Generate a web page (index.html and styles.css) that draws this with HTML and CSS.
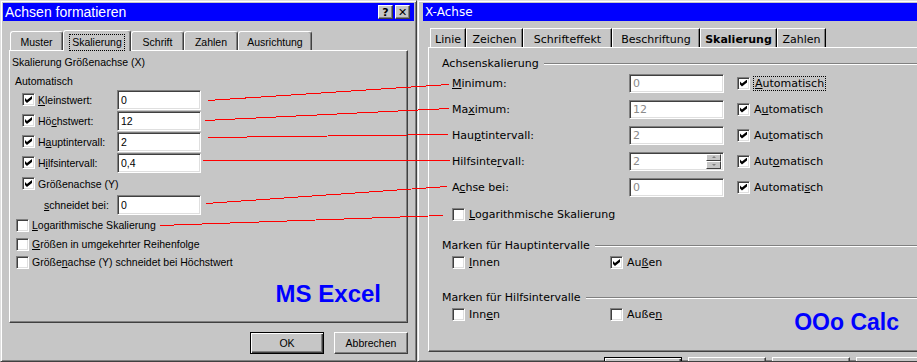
FILE: index.html
```html
<!DOCTYPE html>
<html lang="de">

<head>
    <meta charset="UTF-8">
    <meta name="viewport" content="width=device-width, initial-scale=1.0">
    <title>Achsen formatieren / X-Achse</title>
    <link rel="stylesheet" href="styles.css">
</head>

<body>
    <div class="screen">

        <!-- MS Excel -->
        <section class="dlg xl">
            <header class="caption">
                <span>Achsen formatieren</span>
                <span class="caption-btns"><span class="cbtn">?</span><span class="cbtn">✕</span></span>
            </header>
            <nav class="xl-tabs">
                <span class="tab t-muster">Muster</span>
                <span class="tab active t-skal"><span class="focus">Skalierung</span></span>
                <span class="tab t-schrift">Schrift</span>
                <span class="tab t-zahlen">Zahlen</span>
                <span class="tab t-ausr">Ausrichtung</span>
            </nav>
            <div class="xl-panel">
                <div class="xl-head">Skalierung Größenachse (X)</div>
                <div class="xl-sub">Automatisch</div>
                <div class="xl-rows">
                    <div class="xl-row"><span class="cb on"></span><span class="xl-label"><u>K</u>leinstwert:</span><span class="field">0</span></div>
                    <div class="xl-row"><span class="cb on"></span><span class="xl-label">Hö<u>c</u>hstwert:</span><span class="field">12</span></div>
                    <div class="xl-row"><span class="cb on"></span><span class="xl-label">H<u>a</u>uptintervall:</span><span class="field">2</span></div>
                    <div class="xl-row"><span class="cb on"></span><span class="xl-label">H<u>i</u>lfsintervall:</span><span class="field">0,4</span></div>
                    <div class="xl-row"><span class="cb on"></span><span class="xl-label">Größenachse (Y)</span></div>
                    <div class="xl-row"><span class="cb-space"></span><span class="xl-label indent"><u>s</u>chneidet bei:</span><span class="field">0</span></div>
                </div>
                <div class="xl-opt first"><span class="cb"></span><span><u>L</u>ogarithmische Skalierung</span></div>
                <div class="xl-opt"><span class="cb"></span><span><u>G</u>rößen in umgekehrter Reihenfolge</span></div>
                <div class="xl-opt"><span class="cb"></span><span>Größe<u>n</u>achse (Y) schneidet bei Höchstwert</span></div>
                <div class="xl-brand">MS Excel</div>
            </div>
            <div class="xl-buttons">
                <button class="btn default">OK</button>
                <button class="btn">Abbrechen</button>
            </div>
        </section>

        <!-- OOo Calc -->
        <section class="dlg calc">
            <header class="caption"><span>X-Achse</span></header>
            <nav class="calc-tabs">
                <span class="ctab c-linie">Linie</span>
                <span class="ctab c-zeichen">Zeichen</span>
                <span class="ctab c-effekt">Schrifteffekt</span>
                <span class="ctab c-beschr">Beschriftung</span>
                <span class="ctab active c-skal">Skalierung</span>
                <span class="ctab c-zahlen">Zahlen</span>
            </nav>
            <div class="calc-panel">
                <div class="group"><span>Achsenskalierung</span><i class="rule"></i></div>
                <div class="calc-rows">
                    <div class="calc-row"><span class="calc-label"><u>M</u>inimum:</span><span class="field dim">0</span><span class="cb on"></span><span class="focus"><u>A</u>utomatisch</span></div>
                    <div class="calc-row"><span class="calc-label">Ma<u>x</u>imum:</span><span class="field dim">12</span><span class="cb on"></span><span>A<u>u</u>tomatisch</span></div>
                    <div class="calc-row"><span class="calc-label">Hau<u>p</u>tintervall:</span><span class="field dim">2</span><span class="cb on"></span><span>Au<u>t</u>omatisch</span></div>
                    <div class="calc-row"><span class="calc-label">Hilfsinte<u>r</u>vall:</span><span class="field dim spin-field"><span>2</span><span class="spin"><i class="up"></i><i class="down"></i></span></span><span class="cb on"></span><span>Aut<u>o</u>matisch</span></div>
                    <div class="calc-row"><span class="calc-label">A<u>c</u>hse bei:</span><span class="field dim">0</span><span class="cb on"></span><span>Automati<u>s</u>ch</span></div>
                </div>
                <div class="calc-opt"><span class="cb"></span><span><u>L</u>ogarithmische Skalierung</span></div>

                <div class="group g-major"><span>Marken für Hauptintervalle</span><i class="rule"></i></div>
                <div class="marks">
                    <span class="mark"><span class="cb"></span><span><u>I</u>nnen</span></span>
                    <span class="mark"><span class="cb on"></span><span>Au<u>ß</u>en</span></span>
                </div>

                <div class="group g-minor"><span>Marken für Hilfsintervalle</span><i class="rule"></i></div>
                <div class="marks">
                    <span class="mark"><span class="cb"></span><span>Inn<u>e</u>n</span></span>
                    <span class="mark"><span class="cb"></span><span>Auße<u>n</u></span></span>
                    <span class="calc-brand">OOo Calc</span>
                </div>
            </div>
            <!-- only the top edge of these buttons is in view -->
            <div class="calc-buttons">
                <button class="btn default" aria-label="OK"></button>
                <button class="btn" aria-label="Abbrechen"></button>
                <button class="btn" aria-label="Hilfe"></button>
                <button class="btn" aria-label="Zurück"></button>
            </div>
        </section>

        <!-- Verbindungslinien -->
        <svg class="links" width="917" height="362" viewBox="0 0 917 362">
            <g stroke="#ff0000" stroke-width="1" fill="none" shape-rendering="crispEdges">
                <line x1="208" y1="100.5" x2="449" y2="84.5" />
                <line x1="205" y1="120.5" x2="449" y2="108.5" />
                <line x1="208" y1="137.5" x2="448" y2="134.5" />
                <line x1="203" y1="160.5" x2="450" y2="160.5" />
                <line x1="206" y1="203.5" x2="447" y2="186.5" />
                <line x1="160" y1="225.5" x2="443" y2="215.5" />
            </g>
        </svg>
    </div>
</body>

</html>
```

FILE: styles.css
```css
* {
    box-sizing: border-box;
}

body {
    margin: 0;
    background-color: #c6c6c6;
    overflow: hidden;
}

.screen {
    position: relative;
    display: flex;
    width: 917px;
    height: 362px;
    overflow: hidden;
}

/* window frame */
.dlg {
    flex: none;
    height: 362px;
    padding: 2px;
    background-color: #c6c6c6;
    color: #000;
    border: 1px solid;
    border-color: #dfdfdf #404040 #404040 #dfdfdf;
    box-shadow: inset 1px 1px #fff, inset -1px -1px #808080;
    overflow: hidden;
}

.caption {
    display: flex;
    align-items: center;
    justify-content: space-between;
    height: 18px;
    background-color: #0000ff;
    color: #fff;
    white-space: nowrap;
}

.caption-btns {
    display: flex;
    gap: 2px;
}

.cbtn {
    width: 15px;
    height: 14px;
    display: flex;
    align-items: center;
    justify-content: center;
    background-color: #c6c6c6;
    color: #000;
    font: bold 11px "DejaVu Sans", sans-serif;
    border: 1px solid;
    border-color: #fff #404040 #404040 #fff;
    box-shadow: inset -1px -1px #808080;
}

/* shared controls */
.cb {
    flex: none;
    width: 13px;
    height: 13px;
    display: flex;
    align-items: center;
    justify-content: center;
    background-color: #fff;
    border: 1px solid;
    border-color: #808080 #fff #fff #808080;
    box-shadow: inset 1px 1px #404040, inset -1px -1px #dfdfdf;
}

.cb.on::after {
    content: "";
    width: 7px;
    height: 7px;
    background-color: #000;
    clip-path: polygon(0 28%, 28% 57%, 100% 0, 100% 43%, 28% 100%, 0 71%);
}

.field {
    flex: none;
    display: flex;
    align-items: center;
    background-color: #fff;
    padding-left: 3px;
    border: 1px solid;
    border-color: #808080 #fff #fff #808080;
    box-shadow: inset 1px 1px #404040, inset -1px -1px #dfdfdf;
}

.btn {
    font: inherit;
    color: #000;
    padding: 0;
    background-color: #c6c6c6;
    border: 1px solid;
    border-color: #fff #404040 #404040 #fff;
    box-shadow: inset -1px -1px #808080;
}

.btn.default {
    border-color: #000;
    box-shadow: inset 1px 1px #fff, inset -1px -1px #404040, inset -2px -2px #808080;
}

.focus {
    outline: 1px dotted #000;
}

u {
    text-decoration-thickness: 1px;
    text-underline-offset: 1px;
}

/* ---------- MS Excel ---------- */
.xl {
    width: 417px;
    font: 10.5px "Liberation Sans", Arial, sans-serif;
}

.xl .caption {
    font-size: 14px;
    padding: 0 4px 0 2px;
}

.xl-tabs {
    display: flex;
    align-items: flex-end;
    height: 19px;
    margin-top: 10px;
    padding-left: 7px;
}

.tab {
    height: 19px;
    display: flex;
    align-items: center;
    justify-content: center;
    padding-top: 2px;
    border: 1px solid;
    border-bottom: 0;
    border-color: #fff #404040 transparent #fff;
    border-radius: 3px 3px 0 0;
    box-shadow: inset -1px 0 #808080;
}

.tab.active {
    position: relative;
    z-index: 1;
    height: 21px;
    margin-bottom: -1px;
    background-color: #c6c6c6;
}

.tab .focus {
    padding: 1px 2px 2px;
}

.t-muster { width: 53px; }
.t-skal { width: 68px; }
.t-schrift { width: 53px; }
.t-zahlen { width: 54px; }
.t-ausr { width: 74px; }

.xl-panel {
    height: 273px;
    margin: 0 6px;
    padding-top: 5px;
    display: flex;
    flex-direction: column;
    border: 1px solid;
    border-color: #fff #404040 #404040 #fff;
    box-shadow: inset -1px -1px #808080;
}

.xl-head {
    line-height: 13px;
    padding-left: 2px;
}

.xl-sub {
    line-height: 13px;
    margin-top: 6px;
    padding-left: 5px;
}

.xl-rows {
    margin-top: 1px;
}

.xl-row {
    display: flex;
    align-items: center;
    height: 21px;
    padding-left: 12px;
}

.xl-row .cb,
.cb-space {
    margin-right: 3px;
}

.cb-space {
    width: 13px;
}

.xl-label {
    width: 79px;
    white-space: nowrap;
}

.xl-label.indent {
    padding-left: 6px;
}

.xl .field {
    width: 84px;
    height: 20px;
}

.xl-opt {
    display: flex;
    align-items: center;
    gap: 3px;
    height: 18px;
    padding-left: 6px;
    white-space: nowrap;
}

.xl-opt.first {
    height: 20px;
}

.xl-brand {
    margin-top: 9px;
    padding-right: 26px;
    text-align: right;
    font: bold 24px/28px "Liberation Sans", Arial, sans-serif;
    color: #0000ff;
}

.xl-buttons {
    display: flex;
    justify-content: flex-end;
    gap: 10px;
    margin-top: 9px;
    padding-right: 6px;
}

.xl .btn {
    width: 74px;
    height: 22px;
}

/* ---------- OOo Calc ---------- */
.calc {
    width: 512px;
    font: 11px "DejaVu Sans", sans-serif;
    border-right: 0;
}

.calc .caption {
    margin-left: 3px;
    padding-left: 2px;
    font-size: 12px;
}

.calc-tabs {
    display: flex;
    height: 19px;
    margin-top: 7px;
    padding-left: 10px;
}

.ctab {
    height: 19px;
    display: flex;
    align-items: center;
    justify-content: center;
    padding-top: 2px;
    white-space: nowrap;
    border-top: 1px solid #fff;
    border-left: 1px solid #fff;
    border-right: 1px solid #000;
    box-shadow: inset -1px 0 #808080;
}

.ctab.active {
    font-weight: bold;
}

.c-linie { width: 36px; }
.c-zeichen { width: 57px; }
.c-effekt { width: 89px; }
.c-beschr { width: 88px; }
.c-skal { width: 77px; }
.c-zahlen { width: 49px; }

.calc-panel {
    height: 305px;
    margin-left: 8px;
    padding-top: 9px;
    border: 1px solid;
    border-color: #fff transparent #404040 #fff;
    box-shadow: inset 0 -1px #808080;
}

.group {
    display: flex;
    align-items: center;
    line-height: 13px;
    padding-left: 13px;
    white-space: nowrap;
}

.group .rule {
    flex: 1;
    margin-left: 5px;
    border-top: 1px solid #808080;
    border-bottom: 1px solid #fff;
}

.g-major {
    margin-top: 11px;
}

.g-minor {
    margin-top: 18px;
}

.calc-row {
    display: flex;
    align-items: center;
    height: 26px;
    padding-left: 23px;
    white-space: nowrap;
}

.calc-label {
    width: 177px;
}

.calc .field {
    width: 95px;
    height: 19px;
}

.field.dim {
    color: #8a8a8a;
}

.calc-row .cb {
    margin: 0 4px 0 13px;
}

.calc-row .focus {
    padding: 0 1px;
}

.spin-field {
    justify-content: space-between;
    padding-right: 2px;
}

.spin {
    display: flex;
    flex-direction: column;
    width: 15px;
    height: 15px;
}

.spin i {
    flex: 1;
    display: flex;
    align-items: center;
    justify-content: center;
    background-color: #c6c6c6;
    border: 1px solid;
    border-color: #fff #404040 #404040 #fff;
}

.spin i::after {
    content: "";
    border: 2px solid transparent;
}

.spin .up::after {
    border-bottom-color: #808080;
    border-top-width: 0;
}

.spin .down::after {
    border-top-color: #808080;
    border-bottom-width: 0;
}

.calc-opt {
    display: flex;
    align-items: center;
    gap: 4px;
    height: 28px;
    padding-left: 23px;
}

.marks {
    display: flex;
    align-items: center;
    height: 21px;
    padding-left: 23px;
}

.mark {
    width: 158px;
    display: flex;
    align-items: center;
    gap: 4px;
}

.calc-brand {
    align-self: flex-start;
    margin: 7px 27px 0 auto;
    font: bold 23px/23px "Liberation Sans", Arial, sans-serif;
    color: #0000ff;
    white-space: nowrap;
}

.calc-buttons {
    display: flex;
    gap: 6px;
    margin-top: 5px;
    padding-left: 184px;
}

.calc .btn {
    flex: none;
    width: 78px;
    height: 24px;
}

/* overlay */
.links {
    position: absolute;
    top: 0;
    left: 0;
    pointer-events: none;
}
```
